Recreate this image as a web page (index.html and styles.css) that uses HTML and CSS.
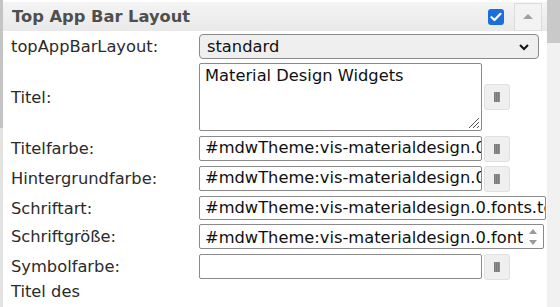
FILE: index.html
```html
<!DOCTYPE html>
<html lang="de">
<head>
    <meta charset="UTF-8">
    <title>Top App Bar Layout</title>
    <link rel="stylesheet" href="styles.css">
</head>
<body>
    <div class="frame">
        <div class="edge"></div>

        <div class="panel">
            <!-- Kopfzeile der Gruppe -->
            <div class="group-head">
                <span class="group-title">Top App Bar Layout</span>
                <span class="check">
                    <svg width="12" height="10" viewBox="0 0 12 10"><path d="M1.5 5.2 L4.5 8 L10.5 1.8" fill="none" stroke="#fff" stroke-width="2.2" stroke-linecap="round" stroke-linejoin="round"/></svg>
                </span>
                <span class="collapse"><span class="tri"></span></span>
            </div>

            <div class="fields">
                <div class="row">
                    <label class="lbl">topAppBarLayout:</label>
                    <div class="select">
                        <span>standard</span>
                        <svg width="12" height="8" viewBox="0 0 12 8"><path d="M2 2 L6 6 L10 2" fill="none" stroke="#111" stroke-width="2"/></svg>
                    </div>
                </div>

                <div class="row row-area">
                    <label class="lbl">Titel:</label>
                    <div class="textarea">
                        Material Design Widgets
                        <svg class="grip" width="14" height="14" viewBox="0 0 14 14"><path d="M13 3 L3 13 M13 7 L7 13 M13 11 L11 13" stroke="#555" stroke-width="1"/></svg>
                    </div>
                    <span class="pick"><span class="swatch"></span></span>
                </div>

                <div class="row">
                    <label class="lbl">Titelfarbe:</label>
                    <div class="input">#mdwTheme:vis-materialdesign.0.colors.app</div>
                    <span class="pick"><span class="swatch"></span></span>
                </div>

                <div class="row">
                    <label class="lbl">Hintergrundfarbe:</label>
                    <div class="input">#mdwTheme:vis-materialdesign.0.colors.app</div>
                    <span class="pick"><span class="swatch"></span></span>
                </div>

                <div class="row">
                    <label class="lbl">Schriftart:</label>
                    <div class="input wide short">#mdwTheme:vis-materialdesign.0.fonts.topAppBar</div>
                </div>

                <div class="row tight">
                    <label class="lbl">Schriftgröße:</label>
                    <div class="input number">
                        <span class="num-text">#mdwTheme:vis-materialdesign.0.fontSizes.app</span>
                        <span class="spin">
                            <span class="up"></span>
                            <span class="down"></span>
                        </span>
                    </div>
                </div>

                <div class="row">
                    <label class="lbl">Symbolfarbe:</label>
                    <div class="input"></div>
                    <span class="pick"><span class="swatch"></span></span>
                </div>

                <div class="row row-last">
                    <label class="lbl">Titel des<br>ausgewählten</label>
                </div>
            </div>
        </div>

        <div class="scrollbar"><div class="thumb"></div></div>
    </div>
</body>
</html>
```

FILE: styles.css
```css
/* Grundlayout */
body {
    margin: 0;
    font-family: "DejaVu Sans", Verdana, sans-serif;
    font-size: 16.3px;
    color: #2b2b2b;
    background: #fff;
    overflow: hidden;
}

.frame {
    display: flex;
    height: 307px;
}

.edge {
    width: 3px;
    background: linear-gradient(#c4c4c4 0, #c4c4c4 128px, #e2e2e2 128px);
}

.panel {
    flex: 1;
    padding-top: 2px;
    overflow: hidden;
}

.scrollbar {
    width: 13px;
    background: #f1f1f1;
}

.thumb {
    height: 43px;
    background: #c9c9c9;
}

/* Kopfzeile */
.group-head {
    display: flex;
    align-items: center;
    height: 29px;
    padding-left: 9px;
    background: linear-gradient(#f4f4f4, #e9e9e9);
}

.group-title {
    flex: 1;
    font-weight: bold;
    color: #4f4f4f;
}

.check {
    display: flex;
    align-items: center;
    justify-content: center;
    width: 16px;
    height: 16px;
    border-radius: 3px;
    background: #1b6fdc;
    margin-right: 10px;
}

.collapse {
    display: flex;
    align-items: center;
    justify-content: center;
    width: 26px;
    height: 26px;
    border: 1px solid #dcdcdc;
    background: #f3f3f3;
    margin-right: 5px;
}

.tri {
    width: 0;
    height: 0;
    border-left: 5px solid transparent;
    border-right: 5px solid transparent;
    border-bottom: 5px solid #a0a0a0;
}

/* Formularzeilen */
.fields {
    display: flex;
    flex-direction: column;
    gap: 5px;
    padding-top: 3px;
}

.row {
    display: flex;
    align-items: center;
    padding-left: 8px;
}

.lbl {
    width: 188px;
    flex: none;
    white-space: nowrap;
}

.row-area {
    margin-top: -1px;
}

.tight {
    margin-top: -1px;
}

.row-last {
    margin-top: -3px;
    align-items: flex-start;
}

.row-last .lbl {
    line-height: 22px;
}

.select {
    box-sizing: border-box;
    display: flex;
    align-items: center;
    justify-content: space-between;
    width: 340px;
    height: 25px;
    padding: 0 8px 0 7px;
    border: 1px solid #8a8a8a;
    border-radius: 4px;
    background: #efefef;
    color: #111;
}

.textarea {
    position: relative;
    box-sizing: border-box;
    width: 283px;
    height: 68px;
    padding: 2px 5px;
    border: 1px solid #8a8a8a;
    border-radius: 2px;
    color: #111;
}

.grip {
    position: absolute;
    right: 1px;
    bottom: 1px;
}

.input {
    box-sizing: border-box;
    width: 283px;
    height: 25px;
    padding: 1px 5px 0;
    border: 1px solid #8a8a8a;
    border-radius: 2px;
    color: #111;
    white-space: nowrap;
    overflow: hidden;
}

.wide {
    width: 347px;
}

.short {
    height: 24px;
}

.number {
    display: flex;
    align-items: center;
    width: 345px;
    padding-right: 2px;
}

.num-text {
    flex: 1;
    overflow: hidden;
}

.spin {
    display: flex;
    flex-direction: column;
    gap: 6px;
    width: 16px;
    margin-left: 2px;
    align-items: center;
}

.up, .down {
    width: 0;
    height: 0;
    border-left: 4px solid transparent;
    border-right: 4px solid transparent;
}

.up {
    border-bottom: 5px solid #9a9a9a;
}

.down {
    border-top: 5px solid #9a9a9a;
}

/* Farbwähler-Knopf */
.pick {
    display: flex;
    align-items: center;
    justify-content: center;
    box-sizing: border-box;
    width: 26px;
    height: 26px;
    margin: -1px 0 -1px 2px;
    border: 1px solid #e0e0e0;
    border-radius: 3px;
    background: #efefef;
}

.swatch {
    width: 6px;
    height: 10px;
    background: repeating-linear-gradient(90deg, #7a7a7a 0, #7a7a7a 1px, #8e8e8e 1px, #8e8e8e 2px);
}
```
